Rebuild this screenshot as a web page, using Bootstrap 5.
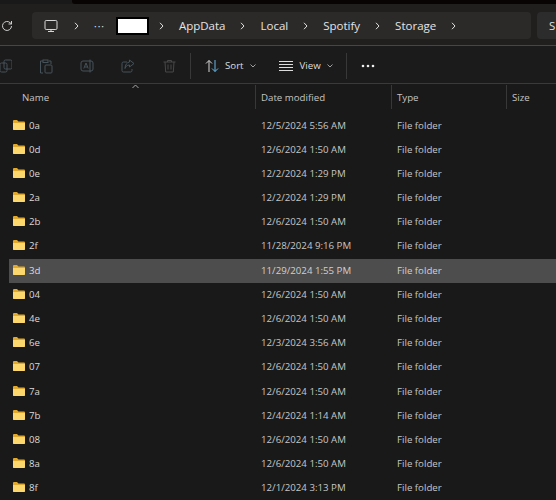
<!DOCTYPE html>
<html lang="en">
<head>
  <meta charset="UTF-8">
  <title>Storage - File Explorer</title>
  <link href="https://cdn.jsdelivr.net/npm/bootstrap@5.3.3/dist/css/bootstrap.min.css" rel="stylesheet" />
  <style>
    html, body { height: 500px; overflow: hidden; }
    body { background: #191919; color: #dcdcdc; font-family: "Open Sans", "Liberation Sans", sans-serif; font-size: 9.7px; width: 556px; }
    .title-strip { height: 4px; margin-left: 72px; background: #080404; border-radius: 0 0 0 3px; }
    .top-area { height: 42px; background: #211f1e; border-bottom: 1px solid #484644; padding-top: 8px; }
    .refresh-icon { width: 32px; flex: none; padding-left: 1px; height: 27px; }
    .path-box { width: 499px; flex: none; height: 27px; background: #2c2a29; border-radius: 4px; padding-left: 12px; font-size: 11.5px; color: #e4e4e4; }
    .search-box { width: 19px; flex: none; height: 27px; margin-left: 6px; background: #2c2c2c; border-radius: 4px 0 0 4px; padding-left: 12px; font-size: 11.5px; color: #e0e0e0; }
    .crumb { margin-right: 15px; }
    .chev { margin-right: 15px; flex: none; }
    .dots-crumb { letter-spacing: 1px; line-height: 1; font-size: 10px; margin-right: 12px; }
    .hidden-name { width: 31px; height: 16px; background: #fff; border: 1px solid #000; box-shadow: 0 0 0 1px #000; margin-right: 11px; flex: none; }
    .tool-bar { height: 38px; padding-top: 3px; border-bottom: 1px solid #3a3a3a; background: #1b1b1b; color: #dedede; }
    .tool-slot { width: 41px; flex: none; justify-content: flex-end; }
    .tool-first { width: 12px; overflow: hidden; flex: none; }
    .tool-gap { width: 1px; height: 26px; background: #383838; flex: none; }
    .head-row, .file-row { display: grid; }
    .head-row { grid-template-columns: 256px 136px 115px 49px; height: 29.500px; position: relative; color: #c4c4c4; line-height: 25px; }
    .head-cell { padding-left: 5px; border-right: 1px solid #383838; height: 24px; margin-top: 1px; }
    .head-name { padding-left: 22px; }
    .head-last { border-right: 0; }
    .sort-caret { position: absolute; left: 132px; top: 0; line-height: 0; }
    .file-row { height: 24.2px; line-height: 24.2px; margin-left: 9px; color: #c6c6c6; grid-template-columns: 247px 136px 115px 49px; }
    .file-row.picked { background: #4d4d4d; color: #d0d0d0; }
    .name-cell { padding-left: 4px; color: #dadada; }
    .date-cell, .type-cell { padding-left: 5px; }
    .folder-glyph { margin-right: 4px; vertical-align: -1px; }
  </style>
</head>
<body>
  <div class="title-strip"></div>

  <div class="top-area d-flex align-items-start">
    <div class="refresh-icon d-flex align-items-center">
      <svg width="12" height="12" viewBox="0 0 12 12" fill="none" stroke="#d0d0d0" stroke-width="1"><path d="M10.5 6a4.5 4.5 0 1 1-1.3-3.2L10.5 4M10.5 1v3h-3"/></svg>
    </div>
    <div class="path-box d-flex align-items-center">
      <svg style="margin-right:16px" width="14" height="14" viewBox="0 0 14 14" fill="none" stroke="#d8d8d8" stroke-width="1"><rect x="1" y="1.5" width="12" height="9" rx="1.2"/><path d="M4 12.5h6M7 10.5v2"/></svg>
      <svg class="chev" width="5" height="8" viewBox="0 0 5 8" fill="none" stroke="#e0e0e0"><path d="M1 .8 4 4 1 7.2"/></svg>
      <span class="dots-crumb">···</span>
      <span class="hidden-name"></span>
      <svg class="chev" width="5" height="8" viewBox="0 0 5 8" fill="none" stroke="#e0e0e0"><path d="M1 .8 4 4 1 7.2"/></svg>
      <span class="crumb">AppData</span>
      <svg class="chev" width="5" height="8" viewBox="0 0 5 8" fill="none" stroke="#e0e0e0"><path d="M1 .8 4 4 1 7.2"/></svg>
      <span class="crumb">Local</span>
      <svg class="chev" width="5" height="8" viewBox="0 0 5 8" fill="none" stroke="#e0e0e0"><path d="M1 .8 4 4 1 7.2"/></svg>
      <span class="crumb">Spotify</span>
      <svg class="chev" width="5" height="8" viewBox="0 0 5 8" fill="none" stroke="#e0e0e0"><path d="M1 .8 4 4 1 7.2"/></svg>
      <span class="crumb">Storage</span>
      <svg class="chev" width="5" height="8" viewBox="0 0 5 8" fill="none" stroke="#e0e0e0"><path d="M1 .8 4 4 1 7.2"/></svg>
    </div>
    <div class="search-box d-flex align-items-center">S</div>
  </div>

  <div class="tool-bar d-flex align-items-center">
    <div class="tool-first">
      <svg class="d-block" width="13" height="14" viewBox="0 0 13 14" fill="none" stroke="#46525a"><rect x="4" y="1" width="8" height="9" rx="1.5"/><rect x="0" y="4" width="7" height="9" rx="1.5"/></svg>
    </div>
    <div class="tool-slot d-flex">
      <svg width="14" height="15" viewBox="0 0 14 15" fill="none" stroke="#46525a"><path d="M4 2H1.5v12H4M10 2h2v3"/><rect x="4" y="1" width="5" height="2.5"/><rect x="6" y="6" width="7" height="8" rx="1"/></svg>
    </div>
    <div class="tool-slot d-flex">
      <svg width="14" height="14" viewBox="0 0 14 14" fill="none" stroke="#46525a"><rect x="1" y="2" width="12" height="10" rx="2"/><path d="M3.8 9.5 6 4l2.2 5.500M4.700 8h2.600M10 .5v13"/></svg>
    </div>
    <div class="tool-slot d-flex">
      <svg width="14" height="14" viewBox="0 0 14 14" fill="none" stroke="#46525a"><path d="M6 3H2.500A1.500 1.500 0 0 0 1 4.500v7A1.500 1.500 0 0 0 2.500 13h7a1.500 1.500 0 0 0 1.500-1.500V10M8.500 1 13 4.500 8.500 8V6C6 6 4.500 7.500 4 9.500 4 6 6 3.300 8.500 3z"/></svg>
    </div>
    <div class="tool-slot d-flex">
      <svg width="13" height="14" viewBox="0 0 13 14" fill="none" stroke="#484848"><path d="M.5 3h12M4.500 3V1.500h4V3M2 3l.7 10h7.600L11 3M5 5.500v5M8 5.500v5"/></svg>
    </div>
    <div class="tool-gap" style="margin-left:14px"></div>
    <svg style="margin-left:14px;margin-right:6px" width="14" height="14" viewBox="0 0 14 14" fill="none" stroke-width="1"><path d="M4 13V1.500M1 4.500 4 1.500l3 3" stroke="#d8d8d8"/><path d="M10 1v11.500M7 9.500l3 3 3-3" stroke="#69b7e8"/></svg>
    <span>Sort</span>
    <svg style="margin-left:6px" width="6" height="4" viewBox="0 0 6 4" fill="none" stroke="#a0a0a0"><path d="M.5.500 3 3 5.500.500"/></svg>
    <svg style="margin-left:23px;margin-right:7px" width="14" height="10" viewBox="0 0 14 10" fill="none" stroke="#dcdcdc"><path d="M0 .500h14M0 3.500h14M0 6.500h14M0 9.500h14"/></svg>
    <span>View</span>
    <svg style="margin-left:6px" width="6" height="4" viewBox="0 0 6 4" fill="none" stroke="#a0a0a0"><path d="M.5.500 3 3 5.500.500"/></svg>
    <div class="tool-gap" style="margin-left:13px"></div>
    <svg style="margin-left:14px" width="14" height="4" viewBox="0 0 14 4" fill="#f0f0f0"><circle cx="2" cy="2" r="1.300"/><circle cx="7" cy="2" r="1.300"/><circle cx="12" cy="2" r="1.300"/></svg>
  </div>

  <div class="head-row">
    <span class="sort-caret"><svg width="7" height="5" viewBox="0 0 7 5" fill="none" stroke="#a8a8a8"><path d="M.5 4 3.500 1l3 3"/></svg></span>
    <div class="head-cell head-name">Name</div>
    <div class="head-cell">Date modified</div>
    <div class="head-cell">Type</div>
    <div class="head-cell head-last">Size</div>
  </div>

  <div id="fileList"></div>

  <script>
    const folders = [
      ['0a', '12/5/2024 5:56 AM'],
      ['0d', '12/6/2024 1:50 AM'],
      ['0e', '12/2/2024 1:29 PM'],
      ['2a', '12/2/2024 1:29 PM'],
      ['2b', '12/6/2024 1:50 AM'],
      ['2f', '11/28/2024 9:16 PM'],
      ['3d', '11/29/2024 1:55 PM'],
      ['04', '12/6/2024 1:50 AM'],
      ['4e', '12/6/2024 1:50 AM'],
      ['6e', '12/3/2024 3:56 AM'],
      ['07', '12/6/2024 1:50 AM'],
      ['7a', '12/6/2024 1:50 AM'],
      ['7b', '12/4/2024 1:14 AM'],
      ['08', '12/6/2024 1:50 AM'],
      ['8a', '12/6/2024 1:50 AM'],
      ['8f', '12/1/2024 3:13 PM']
    ];
    const folderSvg = `<svg class="folder-glyph" width="12" height="10" viewBox="0 0 12 10"><path d="M0 1a1 1 0 0 1 1-1h3l1.500 1.500H11a1 1 0 0 1 1 1V9a1 1 0 0 1-1 1H1a1 1 0 0 1-1-1z" fill="#e0a92e"/><path d="M0 3h12v6a1 1 0 0 1-1 1H1a1 1 0 0 1-1-1z" fill="#fbd76d"/></svg>`;
    const list = document.getElementById('fileList');
    folders.forEach(f => {
      const row = document.createElement('div');
      row.className = 'file-row' + (f[0] === '3d' ? ' picked' : '');
      row.innerHTML = `<div class="name-cell">${folderSvg}${f[0]}</div><div class="date-cell">${f[1]}</div><div class="type-cell">File folder</div><div></div>`;
      list.appendChild(row);
    });
  </script>
  <script src="https://cdn.jsdelivr.net/npm/bootstrap@5.3.3/dist/js/bootstrap.bundle.min.js"></script>
</body>
</html>
